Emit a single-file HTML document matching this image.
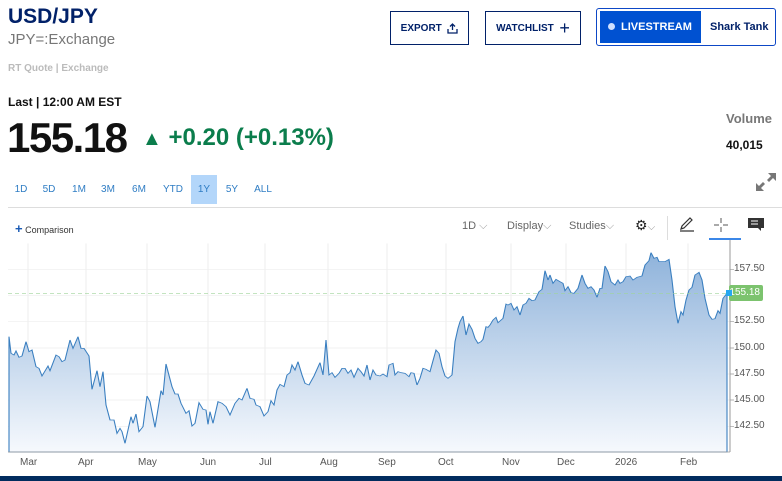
<!DOCTYPE html>
<html><head><meta charset="utf-8"><style>
*{margin:0;padding:0;box-sizing:border-box}
html,body{width:782px;height:481px;overflow:hidden}
body{background:#fff;font-family:"Liberation Sans",sans-serif;position:relative}
.a{position:absolute;white-space:nowrap}
.btn{position:absolute;border:1.5px solid #012169;color:#012169;font-size:10px;font-weight:bold;display:flex;align-items:center;justify-content:center}
.rng{position:absolute;top:175px;height:29px;line-height:29px;font-size:10px;color:#2f7dc4;text-align:center}
.tb{position:absolute;top:220px;font-size:11px;color:#666}
.yl{position:absolute;left:734px;font-size:10px;color:#555}
.xl{position:absolute;top:457px;font-size:10px;color:#555}
</style></head><body>
<div class="a" style="left:8px;top:5px;font-size:21px;font-weight:bold;color:#012169">USD/JPY</div>
<div class="a" style="left:8px;top:31px;font-size:15px;color:#777">JPY=:Exchange</div>
<div class="a" style="left:8px;top:63px;font-size:10px;color:#bbb;font-weight:bold">RT Quote | Exchange</div>
<div class="a" style="left:8px;top:95px;font-size:12px;font-weight:bold;color:#111">Last | 12:00 AM EST</div>
<div class="a" style="left:7px;top:114px;font-size:42px;font-weight:bold;color:#111;letter-spacing:-1.5px">155.18</div>
<div class="a" style="left:142px;top:124px;font-size:24px;font-weight:bold;color:#0b7d4c"><span style="font-size:20px">▲</span> +0.20 (+0.13%)</div>

<div class="btn" style="left:390px;top:11px;width:79px;height:34px">EXPORT&nbsp;&nbsp;<svg width="11" height="11" viewBox="0 0 11 11" fill="none" stroke="#012169" stroke-width="1.3"><path d="M5.5 7V1M3 3.5L5.5 1 8 3.5M1 6v4h9V6"/></svg></div>
<div class="btn" style="left:485px;top:11px;width:96px;height:34px">WATCHLIST&nbsp;&nbsp;<span style="font-size:18px;font-weight:normal">+</span></div>
<div class="a" style="left:596px;top:8px;width:180px;height:38px;border:1.5px solid #0d47c6;border-radius:3px"></div>
<div class="a" style="left:600px;top:11px;width:101px;height:32px;background:#0051d1;color:#fff;font-size:11px;font-weight:bold;line-height:32px;padding-left:8px"><span style="display:inline-block;width:7px;height:7px;border-radius:50%;background:#cfe0ff;margin-right:6px"></span>LIVESTREAM</div>
<div class="a" style="left:710px;top:21px;font-size:11px;font-weight:bold;color:#012169">Shark Tank</div>

<div class="a" style="left:726px;top:111px;font-size:13px;font-weight:bold;color:#777">Volume</div>
<div class="a" style="left:726px;top:138px;font-size:12px;font-weight:bold;color:#111">40,015</div>
<svg class="a" style="left:755px;top:172px" width="22" height="20" viewBox="0 0 22 20" fill="#777"><path d="M13 1h8v8l-3-3-4 4-2-2 4-4zM9 19H1v-8l3 3 4-4 2 2-4 4z"/></svg>

<div class="rng" style="left:8px;width:26px">1D</div>
<div class="rng" style="left:36px;width:26px">5D</div>
<div class="rng" style="left:66px;width:26px">1M</div>
<div class="rng" style="left:95px;width:26px">3M</div>
<div class="rng" style="left:126px;width:26px">6M</div>
<div class="rng" style="left:158px;width:30px">YTD</div>
<div class="rng" style="left:191px;width:26px;background:#b3d6fa">1Y</div>
<div class="rng" style="left:219px;width:26px">5Y</div>
<div class="rng" style="left:250px;width:26px">ALL</div>
<div class="a" style="left:8px;top:207px;width:774px;height:1px;background:#ddd"></div>

<div class="a" style="left:15px;top:221px;font-size:9px;color:#333"><span style="color:#1a5bb5;font-size:13px;font-weight:bold">+</span> Comparison</div>
<div class="tb" style="left:462px">1D <span style="color:#999">⌵</span></div>
<div class="tb" style="left:507px">Display<span style="color:#999">⌵</span></div>
<div class="tb" style="left:569px">Studies<span style="color:#999">⌵</span></div>
<div class="tb" style="left:635px;color:#222;font-size:14px;top:217px">⚙<span style="color:#999;font-size:10px">⌵</span></div>
<div class="a" style="left:667px;top:216px;width:1px;height:24px;background:#ddd"></div>
<svg class="a" style="left:679px;top:216px" width="16" height="16" viewBox="0 0 16 16" fill="none" stroke="#333" stroke-width="1.2"><path d="M2 13l1-3 8-8 2 2-8 8zM1 15h14"/></svg>
<svg class="a" style="left:713px;top:217px" width="16" height="16" viewBox="0 0 16 16" stroke="#555" stroke-width="1"><path d="M8 1v5M8 10v5M1 8h5M10 8h5"/></svg>
<div class="a" style="left:709px;top:238px;width:32px;height:2px;background:#3b87e8"></div>
<svg class="a" style="left:748px;top:218px" width="16" height="14" viewBox="0 0 16 14" fill="#333"><path d="M0 0h16v10h-3v3l-3-3H0z"/><path d="M3 3h7M3 6h7" stroke="#fff" stroke-width="1"/></svg>

<svg class="a" style="left:0;top:240px" width="782" height="241" viewBox="0 0 1564 723" preserveAspectRatio="none">
<defs><linearGradient id="g" x1="0" y1="0" x2="0" y2="1"><stop offset="0" stop-color="#8fb3db"/><stop offset="1" stop-color="#f6f9fd"/></linearGradient></defs>
<g stroke="#eee" stroke-width="2"><path d="M56 10V636M172 10V636M294 10V636M416 10V636M530 10V636M656 10V636M774 10V636M892 10V636M1022 10V636M1132 10V636M1252 10V636M1376 10V636"/><path d="M16 88H1460M16 244H1460M16 324H1460M16 402H1460M16 480H1460M16 560H1460M16 166H1460"/></g>
<path fill="url(#g)" stroke="#3a7fc0" stroke-width="2.2" d="M18,290 L22,340 28,345 32,333 38,352 44,348 52,305 58,335 64,330 72,380 78,385 84,408 96,378 100,392 112,345 118,350 124,365 130,360 140,300 146,325 156,290 162,325 168,325 178,348 184,448 194,392 200,440 206,395 212,495 220,540 228,540 234,580 240,565 244,575 250,610 256,570 262,530 266,550 272,522 278,575 286,560 294,468 300,485 310,562 322,452 326,465 332,372 344,440 350,462 356,462 362,490 372,520 378,512 384,558 390,550 398,488 406,508 412,510 416,553 420,515 426,550 436,485 444,490 452,500 460,525 470,490 478,475 484,480 494,445 500,475 508,478 512,495 520,500 528,528 536,515 542,482 548,495 554,450 560,433 568,440 574,405 580,398 584,375 590,390 596,365 604,405 610,430 618,435 628,408 640,368 646,405 652,300 658,405 664,398 670,412 678,400 684,385 690,385 696,400 702,390 708,412 716,385 722,395 728,408 734,375 740,420 746,390 752,405 760,408 766,402 774,410 778,375 786,370 790,405 796,395 802,398 810,400 818,410 822,398 828,400 834,435 840,415 846,385 852,388 860,395 866,362 872,330 878,340 884,380 890,408 896,415 904,405 910,305 916,265 920,245 926,228 932,285 938,252 944,268 950,295 956,310 962,305 966,298 972,260 976,262 980,255 986,240 992,232 996,248 1006,235 1012,192 1016,195 1022,190 1028,210 1034,200 1040,225 1046,195 1052,190 1058,175 1064,182 1070,180 1078,155 1084,148 1090,92 1096,120 1100,105 1106,130 1112,118 1120,125 1126,130 1130,152 1136,140 1142,158 1148,160 1156,145 1164,105 1170,130 1176,145 1182,140 1188,150 1194,172 1200,145 1204,145 1210,78 1216,95 1222,125 1230,135 1236,120 1240,130 1246,125 1252,110 1260,108 1266,120 1274,112 1284,108 1290,75 1298,62 1302,38 1308,55 1314,52 1318,65 1330,65 1338,58 1344,120 1350,200 1356,250 1362,215 1366,225 1372,180 1378,150 1384,142 1390,105 1398,97 1404,120 1410,175 1418,225 1424,238 1430,236 1436,212 1440,220 1446,175 1454,160 L1454,636 L18,636 Z"/>
<path d="M16 160H1454" stroke="#9fd49a" stroke-width="2" stroke-dasharray="8,6"/>
<path d="M1460 0V636M16 636H1460" stroke="#999" stroke-width="2"/>
<path d="M1460 88h8M1460 244h8M1460 324h8M1460 402h8M1460 480h8M1460 560h8" stroke="#999" stroke-width="2"/>
<rect x="0" y="708" width="1564" height="15" fill="#012c5e"/>
</svg>
<div class="a" style="left:727px;top:285px;width:8px;height:16px;background:#7cc36e;clip-path:polygon(100% 0,100% 100%,0 50%)"></div>
<div class="a" style="left:729px;top:285px;width:34px;height:16px;background:#7cc36e;border-radius:2px;color:#fff;font-size:10px;line-height:16px;text-align:right;padding-right:3px">155.18</div>
<div class="a" style="left:726px;top:290px;width:6px;height:6px;background:#25a7f0"></div>
<div class="yl" style="top:263px">157.50</div>
<div class="yl" style="top:315px">152.50</div>
<div class="yl" style="top:342px">150.00</div>
<div class="yl" style="top:368px">147.50</div>
<div class="yl" style="top:394px">145.00</div>
<div class="yl" style="top:420px">142.50</div>
<div class="xl" style="left:20px">Mar</div>
<div class="xl" style="left:78px">Apr</div>
<div class="xl" style="left:138px">May</div>
<div class="xl" style="left:200px">Jun</div>
<div class="xl" style="left:259px">Jul</div>
<div class="xl" style="left:320px">Aug</div>
<div class="xl" style="left:378px">Sep</div>
<div class="xl" style="left:438px">Oct</div>
<div class="xl" style="left:502px">Nov</div>
<div class="xl" style="left:557px">Dec</div>
<div class="xl" style="left:615px">2026</div>
<div class="xl" style="left:680px">Feb</div>
</body></html>
